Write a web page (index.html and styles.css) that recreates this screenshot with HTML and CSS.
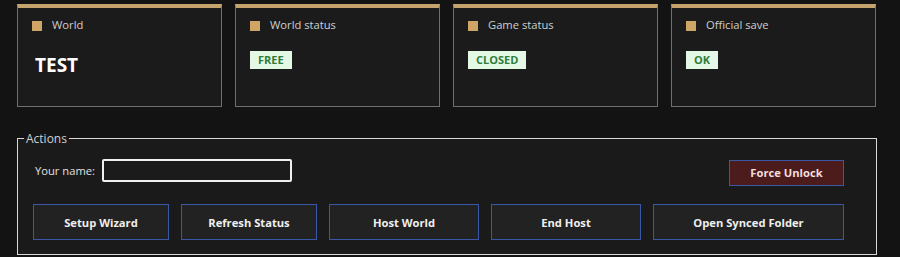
FILE: index.html
```html
<!DOCTYPE html>
<html lang="en">
<head>
    <meta charset="UTF-8">
    <meta name="viewport" content="width=device-width, initial-scale=1.0">
    <title>World Host</title>
    <link rel="stylesheet" href="styles.css">
</head>
<body>
    <div class="status-row">
        <div class="card">
            <div class="card-head"><span class="dot"></span>World</div>
            <div class="world-name">TEST</div>
        </div>
        <div class="card">
            <div class="card-head"><span class="dot"></span>World status</div>
            <span class="badge">FREE</span>
        </div>
        <div class="card">
            <div class="card-head"><span class="dot"></span>Game status</div>
            <span class="badge">CLOSED</span>
        </div>
        <div class="card">
            <div class="card-head"><span class="dot"></span>Official save</div>
            <span class="badge">OK</span>
        </div>
    </div>

    <fieldset class="actions">
        <legend>Actions</legend>
        <div class="name-row">
            <label for="playerName">Your name:</label>
            <input type="text" id="playerName">
            <button class="btn btn-danger">Force Unlock</button>
        </div>
        <div class="button-row">
            <button class="btn btn-sm">Setup Wizard</button>
            <button class="btn btn-sm">Refresh Status</button>
            <button class="btn btn-md">Host World</button>
            <button class="btn btn-md">End Host</button>
            <button class="btn btn-lg">Open Synced Folder</button>
        </div>
    </fieldset>
</body>
</html>
```

FILE: styles.css
```css
* {
    box-sizing: border-box;
}

body {
    margin: 0;
    background-color: #131313;
    color: #d6d6d6;
    font-family: 'Open Sans', 'Noto Sans', sans-serif;
    font-size: 11.2px;
}

.status-row {
    display: flex;
    gap: 13px;
    padding: 4px 0 0 17px;
}

.card {
    width: 205px;
    height: 103px;
    background: #1b1b1b;
    border: 1px solid #6f6f6f;
    border-top: 4px solid #c4a46c;
    padding: 0 14px;
}

.card-head {
    display: flex;
    align-items: center;
    height: 31px;
    padding-top: 1px;
    color: #cfcfcf;
}

.dot {
    width: 10px;
    height: 10px;
    background: #cfa565;
    margin-right: 10px;
    margin-top: 4px;
}

.world-name {
    margin-top: 13px;
    margin-left: 3px;
    font-size: 19px;
    font-weight: bold;
    line-height: 26px;
    color: #ffffff;
}

.badge {
    display: inline-block;
    margin-top: 12px;
    height: 18px;
    line-height: 18px;
    padding: 0 8px;
    background: #e4f8e6;
    color: #2e7d3a;
    font-size: 11px;
    font-weight: bold;
}

.actions {
    margin: 23px 0 0 17px;
    width: 860px;
    height: 125px;
    border: 1px solid #d8d8d8;
    background: #1a1a1a;
    padding: 8px 32px 0 15px;
}

.actions legend {
    padding: 0 2px;
    margin-left: -9px;
    color: #cfcfcf;
    font-size: 12px;
}

.name-row {
    display: flex;
    align-items: center;
    height: 30px;
}

.name-row label {
    margin-left: 2px;
    margin-right: 7px;
    color: #e0e0e0;
}

.name-row input {
    width: 190px;
    height: 23px;
    border: 2px solid #f0f0f0;
    border-radius: 2px;
    background: #1b1b1b;
    color: white;
    outline: none;
}

.btn {
    height: 36px;
    background: #222222;
    border: 1px solid #3a58a8;
    color: #efefef;
    font-family: 'Open Sans', 'Noto Sans', sans-serif;
    font-size: 11.2px;
    font-weight: bold;
    cursor: pointer;
}

.btn-danger {
    margin-left: auto;
    margin-top: 5px;
    width: 115px;
    height: 26px;
    background: #4c1b1b;
    color: #f1dede;
}

.button-row {
    display: flex;
    gap: 12px;
    margin-top: 19px;
}

.btn-sm {
    width: 136px;
}

.btn-md {
    width: 150px;
}

.btn-lg {
    width: 191px;
}
```
